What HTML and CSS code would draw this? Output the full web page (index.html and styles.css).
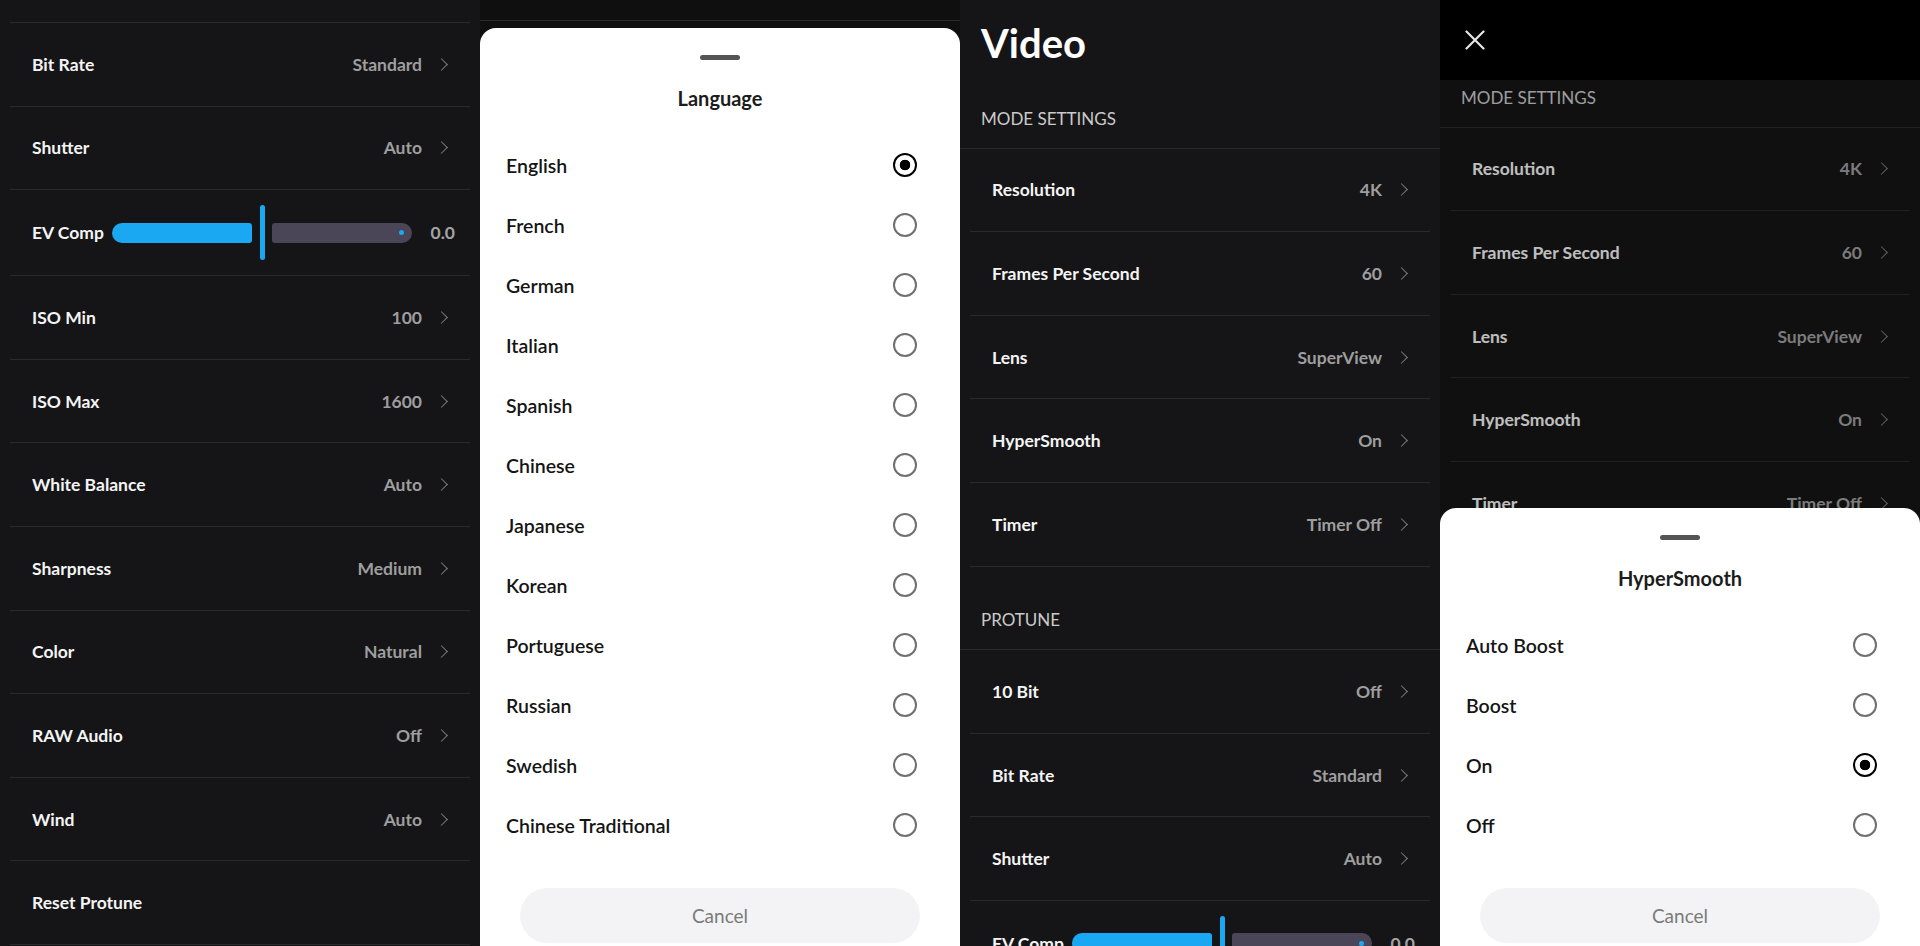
FILE: index.html
```html
<!DOCTYPE html>
<html lang="en">
<head>
    <meta charset="UTF-8">
    <meta name="viewport" content="width=device-width, initial-scale=1.0">
    <title>Camera Settings</title>
    <link rel="stylesheet" href="styles.css">
</head>
<body>

<div class="screens">

    <!-- Screen 1: Protune list, scrolled -->
    <section class="screen">
        <div class="page scrolled-protune">
            <div class="row"><span class="row-label">Bit Rate</span><span class="row-value">Standard</span><span class="chev"></span></div>
            <div class="row"><span class="row-label">Shutter</span><span class="row-value">Auto</span><span class="chev"></span></div>
            <div class="row ev-row">
                <span class="row-label">EV Comp</span>
                <div class="slider">
                    <div class="track-left"></div>
                    <div class="thumb"></div>
                    <div class="track-right"><span class="track-dot"></span></div>
                </div>
                <span class="ev-value">0.0</span>
            </div>
            <div class="row"><span class="row-label">ISO Min</span><span class="row-value">100</span><span class="chev"></span></div>
            <div class="row"><span class="row-label">ISO Max</span><span class="row-value">1600</span><span class="chev"></span></div>
            <div class="row"><span class="row-label">White Balance</span><span class="row-value">Auto</span><span class="chev"></span></div>
            <div class="row"><span class="row-label">Sharpness</span><span class="row-value">Medium</span><span class="chev"></span></div>
            <div class="row"><span class="row-label">Color</span><span class="row-value">Natural</span><span class="chev"></span></div>
            <div class="row"><span class="row-label">RAW Audio</span><span class="row-value">Off</span><span class="chev"></span></div>
            <div class="row"><span class="row-label">Wind</span><span class="row-value">Auto</span><span class="chev"></span></div>
            <div class="row"><span class="row-label">Reset Protune</span></div>
        </div>
    </section>

    <!-- Screen 2: Language sheet -->
    <section class="screen sheet-screen">
        <div class="backdrop"><div class="backdrop-bar"></div></div>
        <div class="sheet">
            <div class="handle"></div>
            <div class="sheet-title">Language</div>
            <div class="options">
                <div class="option"><span>English</span><span class="radio checked"></span></div>
                <div class="option"><span>French</span><span class="radio"></span></div>
                <div class="option"><span>German</span><span class="radio"></span></div>
                <div class="option"><span>Italian</span><span class="radio"></span></div>
                <div class="option"><span>Spanish</span><span class="radio"></span></div>
                <div class="option"><span>Chinese</span><span class="radio"></span></div>
                <div class="option"><span>Japanese</span><span class="radio"></span></div>
                <div class="option"><span>Korean</span><span class="radio"></span></div>
                <div class="option"><span>Portuguese</span><span class="radio"></span></div>
                <div class="option"><span>Russian</span><span class="radio"></span></div>
                <div class="option"><span>Swedish</span><span class="radio"></span></div>
                <div class="option"><span>Chinese Traditional</span><span class="radio"></span></div>
            </div>
            <button class="cancel-btn">Cancel</button>
        </div>
    </section>

    <!-- Screen 3: Video settings -->
    <section class="screen">
        <div class="page">
            <h1 class="page-title">Video</h1>
            <div class="section-head">Mode Settings</div>
            <div class="row"><span class="row-label">Resolution</span><span class="row-value">4K</span><span class="chev"></span></div>
            <div class="row"><span class="row-label">Frames Per Second</span><span class="row-value">60</span><span class="chev"></span></div>
            <div class="row"><span class="row-label">Lens</span><span class="row-value">SuperView</span><span class="chev"></span></div>
            <div class="row"><span class="row-label">HyperSmooth</span><span class="row-value">On</span><span class="chev"></span></div>
            <div class="row"><span class="row-label">Timer</span><span class="row-value">Timer Off</span><span class="chev"></span></div>
            <div class="section-head">Protune</div>
            <div class="row"><span class="row-label">10 Bit</span><span class="row-value">Off</span><span class="chev"></span></div>
            <div class="row"><span class="row-label">Bit Rate</span><span class="row-value">Standard</span><span class="chev"></span></div>
            <div class="row"><span class="row-label">Shutter</span><span class="row-value">Auto</span><span class="chev"></span></div>
            <div class="row ev-row">
                <span class="row-label">EV Comp</span>
                <div class="slider">
                    <div class="track-left"></div>
                    <div class="thumb"></div>
                    <div class="track-right"><span class="track-dot"></span></div>
                </div>
                <span class="ev-value">0.0</span>
            </div>
        </div>
    </section>

    <!-- Screen 4: Video settings with HyperSmooth sheet -->
    <section class="screen">
        <div class="topbar">
            <svg class="close-icon" viewBox="0 0 20 20" width="20" height="20">
                <path d="M1.5 1.5L18.5 18.5M18.5 1.5L1.5 18.5" stroke="#e6e6e6" stroke-width="2.2" stroke-linecap="round" fill="none"/>
            </svg>
        </div>
        <div class="page scrolled-video">
            <div class="section-head">Mode Settings</div>
            <div class="row"><span class="row-label">Resolution</span><span class="row-value">4K</span><span class="chev"></span></div>
            <div class="row"><span class="row-label">Frames Per Second</span><span class="row-value">60</span><span class="chev"></span></div>
            <div class="row"><span class="row-label">Lens</span><span class="row-value">SuperView</span><span class="chev"></span></div>
            <div class="row"><span class="row-label">HyperSmooth</span><span class="row-value">On</span><span class="chev"></span></div>
            <div class="row"><span class="row-label">Timer</span><span class="row-value">Timer Off</span><span class="chev"></span></div>
        </div>
        <div class="scrim"></div>
        <div class="sheet sheet-overlay">
            <div class="handle"></div>
            <div class="sheet-title">HyperSmooth</div>
            <div class="options">
                <div class="option"><span>Auto Boost</span><span class="radio"></span></div>
                <div class="option"><span>Boost</span><span class="radio"></span></div>
                <div class="option"><span>On</span><span class="radio checked"></span></div>
                <div class="option"><span>Off</span><span class="radio"></span></div>
            </div>
            <button class="cancel-btn">Cancel</button>
        </div>
    </section>

</div>

</body>
</html>
```

FILE: styles.css
```css
/* Global */
body {
    margin: 0;
    padding: 0;
    background-color: #000;
    font-family: 'Lato', 'Open Sans', sans-serif;
    color: #f4f4f4;
}

.screens {
    display: grid;
    grid-template-columns: repeat(4, 480px);
    height: 946px;
    overflow: hidden;
}

.screen {
    position: relative;
    height: 946px;
    overflow: hidden;
    background-color: #151517;
}

/* Settings page */
.page {
    display: flex;
    flex-direction: column;
}

/* list scrolled so only the divider of the row above is left */
.scrolled-protune::before {
    content: '';
    height: 22px;
    margin: 0 10px;
    border-bottom: 1px solid #2b2b2e;
}

.scrolled-video {
    margin-top: 44px;
}

.page-title {
    margin: 0;
    height: 65px;
    box-sizing: border-box;
    padding: 20px 21px 0;
    font-size: 40px;
    line-height: 46px;
    font-weight: 700;
    color: #fff;
}

.section-head {
    height: 83.6px;
    box-sizing: border-box;
    display: flex;
    align-items: flex-end;
    padding: 0 21px 19px;
    border-bottom: 1px solid #2b2b2e;
    font-size: 17px;
    line-height: 20px;
    text-transform: uppercase;
    color: #cacaca;
}

.row {
    height: 83.6px;
    box-sizing: border-box;
    margin: 0 10px;
    padding: 0 21px 0 22px;
    display: flex;
    align-items: center;
    border-bottom: 1px solid #2b2b2e;
}

.row-label {
    flex: 1;
    font-size: 17.5px;
    font-weight: 700;
    color: #f4f4f4;
}

.row-value {
    font-size: 17.5px;
    font-weight: 700;
    color: #9e9e9e;
}

.chev {
    width: 8px;
    height: 8px;
    margin: 0 3px 0 15px;
    border-top: 1.5px solid #7c7c7c;
    border-right: 1.5px solid #7c7c7c;
    transform: rotate(45deg);
}

/* EV Comp slider */
.ev-row {
    height: 86px;
    padding-right: 15px;
}

.ev-row .row-label {
    flex: none;
}

.slider {
    flex: 1;
    display: flex;
    align-items: center;
    margin: 0 19px 0 8px;
    height: 55px;
}

.track-left,
.track-right {
    flex: 1;
    height: 20px;
}

.track-left {
    background-color: #1ba8f2;
    border-radius: 10px 3px 3px 10px;
}

.track-right {
    display: flex;
    align-items: center;
    justify-content: flex-end;
    background-color: #4a4658;
    border-radius: 3px 10px 10px 3px;
}

.track-dot {
    width: 5px;
    height: 5px;
    margin-right: 8px;
    border-radius: 50%;
    background-color: #1ba8f2;
}

.thumb {
    width: 5px;
    height: 55px;
    margin: 0 7px 0 8px;
    border-radius: 3px;
    background-color: #1ba8f2;
}

.ev-value {
    font-size: 17.5px;
    font-weight: 700;
    color: #a4a4a4;
}

/* Bottom sheets */
.sheet-screen {
    display: flex;
    flex-direction: column;
    background-color: #0f0f10;
}

.backdrop {
    flex: 1;
}

.backdrop-bar {
    height: 20px;
    border-bottom: 1px solid #2a2a2c;
}

.sheet {
    display: flex;
    flex-direction: column;
    padding: 27px 0 3px;
    background-color: #fff;
    border-radius: 16px 16px 0 0;
    color: #1a1a1a;
}

.sheet-overlay {
    position: absolute;
    left: 0;
    right: 0;
    bottom: 0;
    z-index: 3;
}

.handle {
    align-self: center;
    width: 40px;
    height: 5px;
    border-radius: 3px;
    background-color: #555;
}

.sheet-title {
    margin-top: 26px;
    font-size: 20px;
    line-height: 24px;
    font-weight: 700;
    text-align: center;
    color: #1c1c1c;
}

.options {
    margin-top: 25px;
}

.option {
    height: 60px;
    display: flex;
    align-items: center;
    justify-content: space-between;
    padding: 0 43px 0 26px;
    font-size: 19.5px;
    font-weight: 600;
    color: #151515;
}

.radio {
    width: 24px;
    height: 24px;
    box-sizing: border-box;
    border: 2px solid #6f6f6f;
    border-radius: 50%;
}

.radio.checked {
    border: 2.5px solid #000;
    background: radial-gradient(circle, #000 5px, transparent 5.6px);
}

.cancel-btn {
    margin: 33px 40px 0;
    height: 55px;
    border: none;
    border-radius: 28px;
    background-color: #f3f3f5;
    font-family: inherit;
    font-size: 19px;
    color: #7a7a7a;
}

/* Screen 4 overlays */
.topbar {
    position: absolute;
    top: 0;
    left: 0;
    right: 0;
    height: 80px;
    z-index: 2;
    background-color: #000;
}

.close-icon {
    display: block;
    margin: 30px 0 0 25px;
}

.scrim {
    position: absolute;
    inset: 0;
    z-index: 1;
    background-color: rgba(0, 0, 0, 0.22);
}
```
